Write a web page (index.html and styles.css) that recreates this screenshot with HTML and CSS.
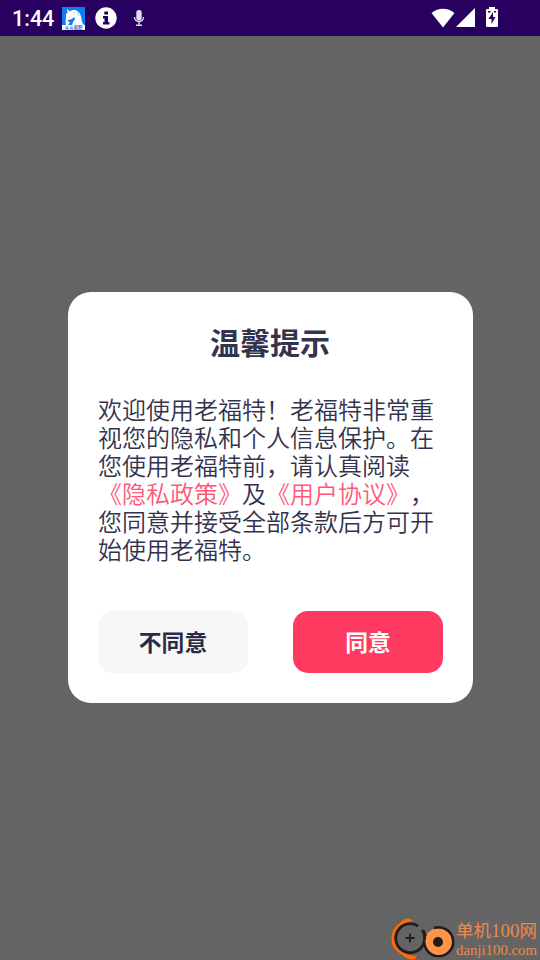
FILE: index.html
```html
<!DOCTYPE html>
<html lang="zh-CN">
<head>
<meta charset="utf-8">
<title>温馨提示</title>
<link rel="stylesheet" href="styles.css">
</head>
<body>
<header class="status">
  <span class="time">1:44</span>
  <svg class="app" width="23" height="23" viewBox="0 0 23 23">
    <rect width="23" height="23" fill="#147bf7"/>
    <path d="M4 18C3 15 4 13 4 10L4 7 5.500 6 5 2 8 4.500C12 1 17 4 18.500 8C20 12 19 15 22 18V23H0V19Z" fill="#fff"/>
    <path d="M6 13L10 12 12 10 13 12 11 15 10 18H6L8 15 6 14.500Z" fill="#147bf7"/>
    <path d="M11 5L13 7M15 5L17 9" stroke="#73b4ff" stroke-width=".7"/>
    <rect y="18" width="23" height="5" fill="#fff"/>
    <text x="2.500" y="22" class="app-label">斗斗直职</text>
  </svg>
  <svg class="info" width="22" height="22" viewBox="0 0 22 22">
    <circle cx="11" cy="11" r="10.700" fill="#fff"/>
    <path d="M9.300 4.500H13V7.500H9.300ZM8 9H13V15H14.400V17.500H8V15H9.500V11.500H8Z" fill="#28005f"/>
  </svg>
  <svg class="mic" width="12" height="18" viewBox="0 0 12 18">
    <rect x="3.300" y="1" width="5.400" height="10.500" rx="2.500" fill="#e4dfeb"/>
    <path d="M1.500 8C1.500 14 10.500 14 10.500 8M6 12.500V16M3 16.300H9" fill="none" stroke="#ddd7e6" stroke-width="1.400"/>
  </svg>
  <svg class="wifi" width="24" height="20" viewBox="0 0 24 20"><path d="M.5 5C7-.8 17-.8 23.500 5L12 19.500Z" fill="#fff"/></svg>
  <svg class="signal" width="19" height="19" viewBox="0 0 19 19"><path d="M0 19L19 0V19Z" fill="#fff"/></svg>
  <svg class="battery" width="12" height="20" viewBox="0 0 12 20">
    <path d="M3 0H9V2H11Q12 2 12 3V19Q12 20 11 20H1Q0 20 0 19V3Q0 2 1 2H3Z" fill="#fff"/>
    <path d="M7 5L2.500 12H5.500V17L9.500 10H7Z" fill="#28005f"/>
    <path d="M2 4H4.500V5.500H2ZM8 4H10V5.500H8Z" fill="#28005f"/>
  </svg>
</header>
<main class="backdrop">
  <section class="dialog">
    <h1 class="title">温馨提示</h1>
    <p class="message">欢迎使用老福特！老福特非常重<br>视您的隐私和个人信息保护。在<br>您使用老福特前，请认真阅读<br><span class="link">《隐私政策》</span>及<span class="link">《用户协议》</span>，<br>您同意并接受全部条款后方可开<br>始使用老福特。</p>
    <div class="actions">
      <button class="btn decline">不同意</button>
      <button class="btn accept">同意</button>
    </div>
  </section>
</main>
<aside class="watermark">
  <svg width="64" height="42" viewBox="0 0 64 42">
    <path d="M22 3C18-1 13 0 9 5C-2 12-2 28 7 34C12 37 16 43 24 41L26 38C16 38 5 33 4 22C3 11 11 5 22 3Z" fill="#ff6a09"/>
    <path d="M27 8A14.500 14.500 0 1 0 32 27Q35 21 32 12" fill="none" stroke="#231c1d" stroke-width="2.800"/>
    <path d="M31 12L36 18" fill="none" stroke="#231c1d" stroke-width="2.500"/>
    <path d="M19 15.500V24.500M14.500 20H23.500" stroke="#231c1d" stroke-width="1.800"/>
    <circle cx="47.500" cy="24" r="13.500" fill="#ff9448"/>
    <path d="M43 10A14.500 14.500 0 1 1 34 19" fill="none" stroke="#231c1d" stroke-width="2.500"/>
    <path d="M36 17L43 12" stroke="#ff9448" stroke-width="2.500"/>
    <circle cx="47" cy="24" r="5" fill="#231c1d"/>
  </svg>
  <div class="brand"><span class="brand-name">单机<span class="brand-num">100</span>网</span><span class="brand-url">danji100.com</span></div>
</aside>
</body>
</html>
```
FILE: styles.css
```css
* { box-sizing: border-box; }
body {
  margin: 0;
  height: 960px;
  overflow: hidden;
  display: flex;
  flex-direction: column;
  background: #646464;
  font-family: "Noto Sans CJK SC", sans-serif;
  text-spacing-trim: space-all;
}
.status {
  height: 36px;
  flex: none;
  display: flex;
  align-items: center;
  padding: 0 42px 0 12px;
  background: #28005f;
  color: #fff;
}
.status svg { flex: none; }
.time {
  width: 50px;
  font: 500 21.5px/36px Roboto, sans-serif;
  padding-top: 1px;
}
.app { margin-top: 1px; }
.app-label { font-size: 4.500px; font-weight: 700; fill: #2879d5; }
.info { margin-left: 10px; }
.mic { margin-left: 16px; }
.wifi { margin-left: auto; margin-top: -1px; }
.signal { margin-left: 1px; margin-top: -1px; }
.battery { margin-left: 11px; margin-top: -2px; }
.backdrop {
  flex: 1;
  display: flex;
  flex-direction: column;
  align-items: center;
  padding-top: 256px;
}
.dialog {
  width: 405px;
  height: 411px;
  margin-left: 1px;
  padding: 28px 30px 30px;
  border-radius: 23px;
  background: #fff;
  color: #33334d;
}
.title {
  margin: 0 1px 0 0;
  font-size: 30px;
  line-height: 42px;
  font-weight: 700;
  text-align: center;
}
.message {
  margin: 33px 0 0;
  font-size: 24px;
  line-height: 28px;
  font-weight: 350;
  white-space: nowrap;
}
.link { color: #ff5777; }
.actions {
  display: flex;
  justify-content: space-between;
  margin-top: 48px;
}
.btn {
  width: 150px;
  height: 62px;
  padding: 0 0 1px;
  border: 0;
  border-radius: 15px;
  font: 700 22.8px/61px "Noto Sans CJK SC", sans-serif;
}
.decline { background: #f7f7f7; color: #2b2b47; }
.accept { background: #ff3a60; color: #fff; }
.watermark {
  position: absolute;
  left: 391px;
  top: 918px;
  display: flex;
  gap: 1px;
  color: #ed8a4c;
}
.brand { display: flex; flex-direction: column; white-space: nowrap; }
.brand-name { font-size: 17.5px; line-height: 24px; }
.brand-num { font-family: "Liberation Serif", serif; font-size: 19px; }
.brand-url { font: 14.8px/15px "Liberation Serif", serif; }
```
